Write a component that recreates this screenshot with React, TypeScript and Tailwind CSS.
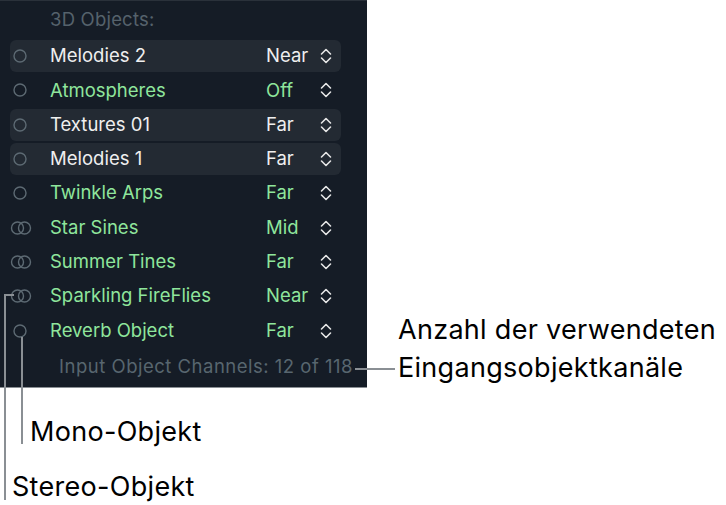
type Row = { name: string; value: string; stereo?: boolean; active?: boolean };

const rows: Row[] = [
  { name: 'Melodies 2', value: 'Near', active: true },
  { name: 'Atmospheres', value: 'Off' },
  { name: 'Textures 01', value: 'Far', active: true },
  { name: 'Melodies 1', value: 'Far', active: true },
  { name: 'Twinkle Arps', value: 'Far' },
  { name: 'Star Sines', value: 'Mid', stereo: true },
  { name: 'Summer Tines', value: 'Far', stereo: true },
  { name: 'Sparkling FireFlies', value: 'Near', stereo: true },
  { name: 'Reverb Object', value: 'Far' },
];

function ChannelIcon({ stereo }: { stereo?: boolean }) {
  if (stereo) {
    return (
      <svg width="22" height="14" viewBox="0 0 22 14" className="shrink-0">
        <circle cx="7.5" cy="7" r="6" fill="none" stroke="#5d6a73" strokeWidth="1.4" />
        <circle cx="14.5" cy="7" r="6" fill="none" stroke="#5d6a73" strokeWidth="1.4" />
      </svg>
    );
  }
  return (
    <svg width="22" height="14" viewBox="0 0 22 14" className="shrink-0">
      <circle cx="10" cy="7" r="6" fill="none" stroke="#5d6a73" strokeWidth="1.4" />
    </svg>
  );
}

function Stepper() {
  return (
    <svg width="12" height="16" viewBox="0 0 12 16" className="shrink-0">
      <path d="M1.5 6 L6 1.5 L10.5 6" fill="none" stroke="currentColor" strokeWidth="1.6" strokeLinecap="round" strokeLinejoin="round" />
      <path d="M1.5 10 L6 14.5 L10.5 10" fill="none" stroke="currentColor" strokeWidth="1.6" strokeLinecap="round" strokeLinejoin="round" />
    </svg>
  );
}

export default function App() {
  return (
    <div className="relative w-[726px] h-[505px] bg-white overflow-hidden" style={{ fontFamily: 'Inter, "Noto Sans", sans-serif' }}>
      {/* panel */}
      <div className="w-[367px] h-[388px] bg-[#151c26] border-t border-[#2a313a] border-b border-b-[#8a8f94] flex flex-col">
        <div className="h-[38px] flex items-center pl-[50px] text-[18.5px] tracking-[0.2px] text-[#55626c]">3D Objects:</div>
        <div className="flex flex-col">
          {rows.map((r) => (
            <div key={r.name} className="h-[34.3px] flex items-center px-[10px]">
              <div
                className={`h-[32px] w-[331px] rounded-[6px] flex items-center pr-[9px] ${
                  r.active ? 'bg-[#232a33] text-[#efefef]' : 'text-[#8fe69c]'
                }`}
              >
                <ChannelIcon stereo={r.stereo} />
                <span className="ml-[18px] text-[18.5px] flex-1">{r.name}</span>
                <span className="w-[46px] text-[18.5px]">{r.value}</span>
                <span className="ml-[8px] text-[#e6e6e6]">
                  <Stepper />
                </span>
              </div>
            </div>
          ))}
        </div>
        <div className="flex-1 flex items-center justify-end pr-[14px] text-[18.5px] tracking-[0.5px] text-[#58666f]">
          Input Object Channels: 12 of 118
        </div>
      </div>

      {/* callouts */}
      <div className="absolute left-[355px] top-[368px] w-[40px] h-[2px] bg-[#8a8f94]" />
      <div className="absolute left-[398px] top-[311px] text-[27px] tracking-[0.3px] leading-[38px] text-black">
        <div>Anzahl der verwendeten</div>
        <div>Eingangsobjektkanäle</div>
      </div>

      <div className="absolute left-[21px] top-[337px] w-[2px] h-[107px] bg-[#8a8f94]" />
      <div className="absolute left-[30px] top-[415px] text-[27px] tracking-[0.3px] leading-[34px] text-black">Mono-Objekt</div>

      <div className="absolute left-[4px] top-[294px] w-[2px] h-[206px] bg-[#8a8f94]" />
      <div className="absolute left-[4px] top-[294px] w-[10px] h-[2px] bg-[#8a8f94]" />
      <div className="absolute left-[12px] top-[470px] text-[27px] tracking-[0.3px] leading-[34px] text-black">Stereo-Objekt</div>
    </div>
  );
}
